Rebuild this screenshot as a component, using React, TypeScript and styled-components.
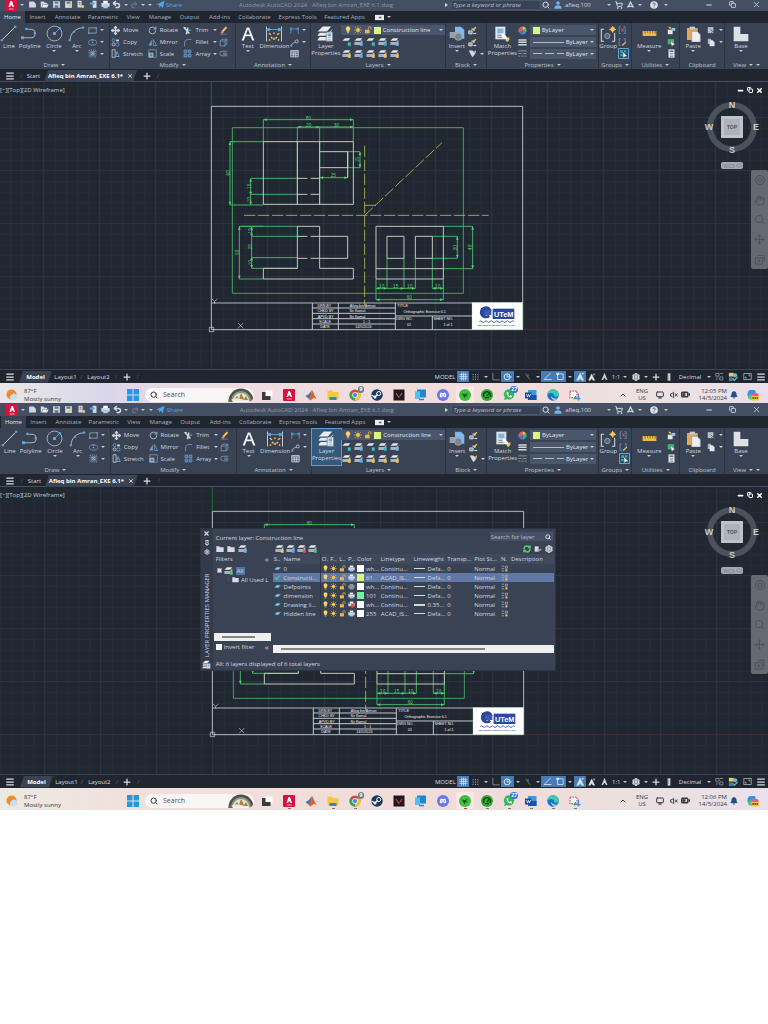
import React, { useId } from "react";
import styled, { createGlobalStyle, css } from "styled-components";
import {
  Menu, Plus, X, Search, Undo2, Redo2, Settings, ShoppingCart, Move, VolumeX, BatteryMedium,
  Monitor, ChevronUp, Bell, Minus, Copy as Restore, RefreshCw, RotateCw, Hand, Pin,
} from "lucide-react";

const L = "#d3d8e0";
const B = "#62a6dd";
const Y = "#efc55c";

const Global = createGlobalStyle`
  *, *::before, *::after { box-sizing: border-box; }
  body { margin: 0; background: #fff; font: 6px/8px "Open Sans", "Noto Sans", sans-serif; color: #d3d8e0; }
  button, input, select { font: inherit; color: inherit; background: none; border: 0; padding: 0; margin: 0; }
  svg { display: block; flex: none; }
`;

/* ---------- icons ---------- */
const art: Record<string, React.ReactNode> = {
  logo: <><rect width="24" height="24" rx="2" fill="#d8123f" /><path d="M7 16 11 4h3l4 12h-3l-1-3h-3l-1 3z" fill="#fff" /><path d="M8 20h9" stroke="#f7a5b8" strokeWidth="2" /></>,
  newFile: <path d="M3 4h12l6 6v10H3z" fill={L} />,
  open: <><path d="M2 4h8l2 3h7v4H7L4 20H2z" fill={L} /><path d="M8 12h15l-4 8H5z" fill="#eef1f5" /></>,
  save: <><path d="M3 3h18v18H3z" fill={L} /><path d="M7 4h10v6H7zM7 14h10v7H7z" fill="#6d7789" /></>,
  saveAs: <><path d="M3 3h18v18H3z" fill={L} /><path d="M7 4h10v6H7z" fill="#6d7789" /><path d="m10 20 11-9" stroke={Y} strokeWidth="4" /></>,
  sheetOut: <><path d="M4 2h11v18H4z" fill={L} /><path d="M7 7h5M7 11h5" stroke="#5b6577" strokeWidth="2" /><path d="M12 17h10M18 13v8" stroke={Y} strokeWidth="4" /></>,
  sheetIn: <><path d="M10 2h10v19H10z" fill={L} /><path d="M2 9h9M8 5l5 4-5 4" stroke={B} strokeWidth="4" fill="none" /></>,
  print: <><path d="M6 2h12v6H6z" fill="#fff" /><path d="M1 8h22v10H1z" fill={L} /><path d="M6 13h12v9H6z" fill="#9fd0ef" /></>,
  noPrint: <><path d="M6 2h12v6H6z" fill="#fff" /><path d="M1 8h22v10H1z" fill={L} /><circle cx="16" cy="16" r="7" fill="#e5484d" /></>,
  dimPrint: <path d="M6 3h12v5h5v10h-5v4H6v-4H1V8h5z" fill="#8a93a1" />,
  line: <><path d="M3 21 21 3" stroke={L} strokeWidth="1.3" /><path d="M1 20h3v3H1zM20 1h3v3h-3z" fill={B} /></>,
  polyline: <><path d="M2 18h12a6 6 0 0 0 0-12H8" stroke="#9fb0c5" strokeWidth="1.5" fill="none" /><path d="M0 16h4v4H0zM6 4h3v3H6zM18 10h3v3h-3z" fill={B} /></>,
  circle: <><circle cx="12" cy="12" r="10.5" stroke="#aab6c6" strokeWidth="1.3" fill="none" /><path d="m12 12 7-7" stroke={B} strokeWidth="1.2" /><path d="M10 10h4v4h-4zM18 3h3v3h-3z" fill={B} /></>,
  arc: <><path d="M3 21C3 12 11 4 21 4" stroke="#aab6c6" strokeWidth="1.4" fill="none" /><path d="M1 20h3v3H1zM20 2h3v3h-3zM7 8h3v3H7z" fill={B} /></>,
  rect: <><path d="M2 5h20v14H2z" stroke="#9dabbd" strokeWidth="2" fill="none" /><path d="M0 17h4v4H0zM20 3h4v4h-4z" fill={B} /></>,
  ellipse: <><ellipse cx="12" cy="12" rx="11" ry="7" stroke="#7fa3c9" strokeWidth="2" fill="none" /><path d="M10 10h4v4h-4zM10 3h4v4h-4z" fill={B} /></>,
  hatch: <><path d="M3 3h18v18H3z" stroke="#9dabbd" strokeWidth="2" strokeDasharray="3 2" fill="none" /><path d="M6 6h12v12H6z" fill="#5e84ab" /><path d="m7 17 10-10M7 11l4-4M13 17l4-4" stroke={L} strokeWidth="1.4" /></>,
  copy: <><circle cx="7" cy="6" r="4" stroke={B} strokeWidth="2" fill="none" /><circle cx="7" cy="17" r="4" stroke={L} strokeWidth="2" fill="none" /><circle cx="17" cy="17" r="4.5" stroke={B} strokeWidth="2" fill="none" /><path d="M14 4h7v5h-7z" fill={L} /></>,
  stretch: <><path d="M3 2v20h8V2z" stroke={L} strokeWidth="2" fill="none" /><path d="M12 20h10L16 7z" stroke={B} strokeWidth="2.5" fill="none" /></>,
  mirror: <><path d="M10 4v16H1z" fill="#7f9dbd" /><path d="M14 4v16h9z" stroke={B} strokeWidth="2" fill="none" /></>,
  scale: <><path d="M2 2h20v20H2z" stroke="#7f9dbd" strokeWidth="2" fill="none" /><path d="M3 11h10v10H3z" fill="#4d82b5" stroke={L} strokeWidth="2" /></>,
  trim: <><path d="M3 4 17 20M9 22l4-18" stroke={L} strokeWidth="4" /><path d="M13 11h9" stroke={B} strokeWidth="3" /><path d="M1 4h6" stroke={L} strokeWidth="3" /></>,
  fillet: <path d="M4 22V14C4 8 8 4 14 4h8" stroke="#6f93b9" strokeWidth="2.5" fill="none" />,
  array: <path d="M3 3h7v7H3zM14 3h7v7h-7zM3 14h7v7H3zM14 14h7v7h-7z" fill="#35618d" stroke="#7fa9d3" strokeWidth="2" />,
  erase: <><path d="M8 16 20 3" stroke={Y} strokeWidth="5" /><path d="m4 18 6-5 3 3-5 5z" fill="#e88b8b" /><path d="M2 22h20" stroke="#8291a6" strokeWidth="1.5" /></>,
  box3d: <path d="M3 8h13v13H3zM3 8l5-5h13l-5 5M21 3v13l-5 5" stroke="#7fa3c9" strokeWidth="2" fill="none" />,
  offset: <path d="M22 6H8a6 6 0 0 0 0 12h14M22 11H11M22 14H11" stroke="#7f9dbd" strokeWidth="2" fill="none" />,
  text: <path d="M1 23 10 1h4l9 22h-4l-2.5-7h-9L5 23zM8.600 13h6.800L12 4z" fill="#eef0f4" />,
  dim: <><path d="M2 2v20M22 2v20" stroke={L} strokeWidth="1.2" /><path d="M2 6h20M2 6l4-2v4zM22 6l-4-2v4z" stroke={B} strokeWidth="1.2" fill={B} /><path d="m8 13-3-2M12 12v-2M16 13l3-2M8 16l2 2M16 16l-2 2M12 17v3M7 20H5M19 20h-2" stroke={Y} strokeWidth="2" /></>,
  dimSmall: <path d="M2 3v18M22 3v18M2 8h20M6 5 2 8l4 3M18 5l4 3-4 3" stroke={B} strokeWidth="2" fill="none" />,
  leader: <><path d="M3 20c4-8 8-8 11-8" stroke={L} strokeWidth="2" fill="none" /><circle cx="18" cy="9" r="4" stroke={L} strokeWidth="2" fill="none" /><path d="M1 18h5v5H1z" fill={B} /></>,
  table: <path d="M2 4h20v17H2zM2 8h20M9 8v13M15 8v13M2 14h20" stroke={L} strokeWidth="2" fill="#596679" />,
  layers: <><path d="m1 9 7-7h12l-6 7zM1 14l3-3h12l6-5-6 9H1zM1 20l3-3h11v5H1z" fill="#e8ebef" /><path d="M13 10h9v13h-9z" fill="#f1f3f6" stroke="#6b7587" /><path d="M15 12h5v4h-5z" fill={B} /><path d="M15 18h5M15 21h5" stroke="#7b8698" /></>,
  bulb: <><path d="M12 1a7 7 0 0 0-4 12.500V17h8v-3.500A7 7 0 0 0 12 1z" fill="#ffd566" /><path d="M9 18h6v4H9z" fill="#a7adb8" /></>,
  sun: <><circle cx="12" cy="12" r="6" fill="#f5c145" /><path d="M12 1v4M12 19v4M1 12h4M19 12h4M4 4l3 3M17 17l3 3M4 20l3-3M17 7l3-3" stroke="#f5c145" strokeWidth="2.500" /></>,
  lock: <><path d="M3 11h14v11H3z" fill="#e8b64c" /><path d="M13 11V6a4 4 0 0 1 8 0v4" stroke="#e8b64c" strokeWidth="2.500" fill="none" /></>,
  insert: <><path d="M9 1h9l5 5v13H9z" fill="#7db9ea" /><path d="M1 9h14v9H1z" fill="#97a1af" /><circle cx="14" cy="16" r="5.500" fill="#7a8594" stroke="#aeb7c3" /></>,
  blockEdit: <><path d="M2 13h9v8H2zM9 8h7v5" stroke={L} strokeWidth="2.500" fill="#8d97a6" /><path d="m13 12 8-9" stroke={Y} strokeWidth="4" /><path d="M14 20h8" stroke={L} strokeWidth="3" /></>,
  tag: <><path d="M2 4h10l8 8-8 10-5-8z" fill={L} /><path d="m13 9 8-6v7z" fill={Y} /></>,
  listEdit: <><path d="M2 4h12v16H2z" fill={L} /><path d="m10 14 12-3v5l-8 3z" fill="#9aa4b2" /></>,
  match: <><path d="M2 1h15v19H2z" fill="#dfe3e8" /><path d="M5 4h9v7H5z" fill="#79b7e6" /><path d="M5 14h7M5 17h7" stroke="#7c8798" strokeWidth="1.500" /><path d="m12 12 8 8" stroke="#fff" strokeWidth="4" /><path d="m17 22 6-6v5l-3 3z" fill={Y} /></>,
  wheel: <><path d="M12 12V1a11 11 0 0 1 9.500 5.500z" fill="#f3c63c" /><path d="M12 12 21.500 6.500a11 11 0 0 1 0 11z" fill="#52b960" /><path d="m12 12 9.500 5.500A11 11 0 0 1 12 23z" fill="#35a0d8" /><path d="M12 12v11a11 11 0 0 1-9.500-5.500z" fill="#5c6bd0" /><path d="m12 12-9.500 5.500a11 11 0 0 1 0-11z" fill="#c558b4" /><path d="M12 12 2.500 6.500A11 11 0 0 1 12 1z" fill="#ea6544" /></>,
  weights: <path d="M1 5h22M1 11h22M1 18h22" stroke={L} strokeWidth="4" />,
  styles: <path d="M1 5h22M1 12h9M13 12h10M1 19h5M9 19h6M18 19h5" stroke="#8d98a9" strokeWidth="2.500" />,
  group: <><path d="M6 5H2v18h4M18 23h4V10" stroke={L} strokeWidth="1.600" fill="none" /><circle cx="11" cy="15" r="4" stroke="#8fa1b7" strokeWidth="1.500" fill="#58677c" /><circle cx="19" cy="5" r="3.500" fill={Y} /><path d="M19 0v10M14 5h10" stroke={Y} strokeWidth="1.500" /></>,
  ungroup: <><path d="M7 2H3v18h4M15 2h4v18h-4" stroke={B} strokeWidth="2" fill="none" /><path d="m9 6 6 9M15 6l-6 9" stroke="#e66b6b" strokeWidth="2" /></>,
  groupEdit: <><path d="M7 2H3v18h4M15 2h4v9" stroke={B} strokeWidth="2" fill="none" /><path d="m11 20 10-9" stroke={Y} strokeWidth="3.500" /></>,
  groupPick: <><path d="M1 1h22v22H1z" stroke="#6aaee3" strokeWidth="2" fill="#255070" /><path d="M5 5h6v6H5zM13 5h5v5h-5zM5 13h5v5H5z" fill="#57a579" /><path d="m11 9 9 9h-5l-3 4z" fill="#fff" /></>,
  measure: <><path d="M1 8h22v8H1z" fill="#e9b84d" /><path d="M5 8v4M9 8v3M13 8v4M17 8v3M21 8v4" stroke="#7a5a17" strokeWidth="1.200" /></>,
  selectFast: <><path d="M2 10h13v12H2z" fill="#e1e5ea" /><path d="m3 1 6 9 2-7z" fill={Y} /><path d="M12 5h10v8H12z" fill="#8fc4eb" /></>,
  selectAll: <><path d="M2 3h17v14H2z" fill="#49ad74" /><path d="m11 9 10 9h-5l-3 5z" fill="#fff" /></>,
  calc: <><path d="M4 1h16v22H4z" fill="#e2e5e9" /><path d="M7 4h10v4H7z" fill="#626c7c" /><path d="M8 12h8M8 16h8M8 20h8" stroke="#626c7c" strokeWidth="2" strokeDasharray="2 1" /></>,
  paste: <><path d="M3 3h16v18H3z" fill="#dfa85a" /><path d="M7 1h8v4H7z" fill="#c8ccd3" /><path d="M10 8h8l5 5v11H10z" fill="#eceef1" stroke="#8a93a2" /></>,
  cut: <><path d="M2 3h15v16H2z" fill="#b9c0ca" /><path d="m9 9 12 12M21 9 9 21" stroke="#5b6473" strokeWidth="2.500" /></>,
  clip: <><path d="M2 2h9v14H2z" fill="#aab2bf" /><path d="M7 6h8l5 5v11H7z" fill="#e3e6ea" /></>,
  base: <path d="M1 1h10v11h12v11H1z" fill="#dde0e4" />,
  plane: <path d="M1 12 23 2l-5 19-6-6-3 6-1-8z" fill="#45aaf0" />,
  app: <><path d="M12 2 3 20h4l5-11 5 11h4z" fill={L} /><path d="M4 17h16" stroke={L} strokeWidth="3" /></>,
  person: <><circle cx="12" cy="6" r="5.500" fill="#70b5ee" /><path d="M1 23c0-7 5-10 11-10s11 3 11 10z" fill="#70b5ee" /></>,
  help: <><circle cx="12" cy="12" r="11.500" fill="#dde1e7" /><path d="M8.500 9.500a3.500 3.500 0 1 1 5 3c-1.500.8-1.500 1.500-1.500 3M12 17v2.500" stroke="#434d60" strokeWidth="2.600" fill="none" /></>,
  ribbon: <><path d="M0 5h24v14H0z" fill="#e9ebee" /><path d="M10 10h7v4h-7z" fill="#5c6573" /></>,
  grid: <path d="M7 1v22M12 1v22M17 1v22M1 7h22M1 12h22M1 17h22" stroke="#e6ecf3" strokeWidth="1.800" />,
  dots: <path d="M2 5h20M2 12h20M2 19h20" stroke="#aab2be" strokeWidth="3" strokeDasharray="3 4" />,
  ortho: <path d="M5 2v19h18" stroke="#7d8796" strokeWidth="2.500" fill="none" />,
  polar: <><circle cx="11" cy="13" r="8" stroke="#e3edf7" strokeWidth="2.500" fill="none" /><path d="M11 13h12M11 5v8" stroke="#e3edf7" strokeWidth="2" /></>,
  iso: <path d="M4 2l14 18M12 12V3" stroke="#79848f" strokeWidth="2.500" />,
  angle: <path d="M20 3 3 20h20" stroke="#d7e7f6" strokeWidth="2.200" fill="none" />,
  osnap: <><path d="M4 5h15v15H4z" stroke="#d7e7f6" strokeWidth="2.200" fill="none" /><path d="M1 2h7v6H1z" fill="#d7e7f6" /></>,
  anno: <path d="M11 3 2 22h5l4-7 4 7h5zM9 14h6M18 1v7M15 4h7" fill="#dfe5ec" stroke="#dfe5ec" strokeWidth="1.500" />,
  annoPlain: <path d="M12 2 4 21h4l4-6 4 6h4z" fill="#c7ced7" />,
  quick: <path d="M2 4h9v7H2zM13 13h8v8h-8zM13 4h9M5 14v7M9 18h3" stroke="#8b95a4" strokeWidth="2.200" fill="none" />,
  isolate: <><path d="M2 2h12v9H2z" fill={Y} /><path d="M2 13h9v9H2z" fill="#3c79c5" /><circle cx="17" cy="8" r="5" fill="#68b6ef" /><path d="m11 15 4 5 8-8" stroke="#67ce7d" strokeWidth="3" fill="none" /></>,
  clean: <path d="M2 4h20v16H2zM14 8h4v4M10 16H6v-4" stroke="#b4bcc7" strokeWidth="2" fill="none" />,
  unit: <path d="M8 1h8v22H8zM8 6h4M8 11h4M8 17h4" fill="#d6dbe2" stroke="#616b7a" strokeWidth="1.300" />,
  slab: <path d="M3 15 9 8h13l-7 8z" fill="#8fc9ef" stroke="#4a9dd5" strokeWidth="2" />,
  check: <path d="m3 12 6 6L22 5" stroke="#55d07c" strokeWidth="4" fill="none" />,
  vp: <><path d="M2 4h9M2 12h9M2 20h9M15 4h7v7h-7z" stroke="#a9b1bd" strokeWidth="2.500" fill="none" /><path d="M15 15h7v7h-7z" fill={Y} /></>,
  folder: <path d="M1 4h9l2 3h11v14H1z" fill="#d7dbe1" />,
  windows: <path d="M0 0h11v11H0zM13 0h11v11H13zM0 13h11v11H0zM13 13h11v11H13z" fill="#2598e4" />,
  weather: <><circle cx="11" cy="11" r="10" fill="#f28c28" /><path d="M10 21a5 5 0 0 1 1-9 6 6 0 0 1 11 3 3.500 3.500 0 0 1-1 6z" fill="#c8def5" /></>,
  taskview: <><path d="M8 3h15v14H8z" fill="#fbfbfb" /><path d="M2 6h7v8h10v8H2z" fill="#3a3a3a" /></>,
  matlab: <><path d="M1 14 8 10l6-8-3 14-4 3z" fill="#3f76a8" /><path d="M14 2c3 4 5 12 9 18-4-3-6-3-8 0l-5 3-3-4c4-2 5-9 7-17z" fill="#df6226" /></>,
  explorer: <><path d="M1 3h9l2 3h11v15H1z" fill="#f7c744" /><path d="M5 16h14v6H5z" fill="#2d86d0" /></>,
  chrome: <><circle cx="12" cy="12" r="11" fill="#e0453a" /><path d="M12 12 2.500 6.500A11 11 0 0 0 12 23z" fill="#37a457" /><path d="M12 12v11A11 11 0 0 0 22 7H12z" fill="#f5c62c" /><circle cx="12" cy="12" r="5" fill="#3e82ec" stroke="#fff" strokeWidth="1.600" /></>,
  steam: <><circle cx="12" cy="12" r="11.500" fill="#183b61" /><circle cx="15.500" cy="9" r="4" stroke="#fff" strokeWidth="2" fill="none" /><circle cx="8" cy="16" r="3" fill="#fff" /><path d="m1 12 7 4 5-5" stroke="#fff" strokeWidth="2.500" fill="none" /></>,
  valorant: <><path d="M1 1h22v22H1z" fill="#1b1922" /><path d="m6 8 5 8h3M18 8l-4 6" stroke="#e6485b" strokeWidth="2.200" fill="none" /></>,
  pc: <><path d="M4 1h18v16H4z" fill="#1e88d5" /><path d="M0 5h10v15H0z" fill="#58bdf2" /><path d="M8 21h10" stroke="#1e88d5" strokeWidth="3" /></>,
  discord: <><circle cx="12" cy="12" r="12" fill="#6877ea" /><path d="M6 16c-1-4 0-7 2-9l3 1h2l3-1c2 2 3 5 2 9l-3 1-1-2h-4l-1 2z" fill="#fff" /><circle cx="9.500" cy="12" r="1.500" fill="#6877ea" /><circle cx="14.500" cy="12" r="1.500" fill="#6877ea" /></>,
  razer: <><circle cx="12" cy="12" r="12" fill="#3bc13b" /><path d="m5 8 6 3 7-4-4 5 3 2-5 1-1 4-2-5z" fill="#184818" /></>,
  cortex: <><circle cx="12" cy="12" r="12" fill="#2cab30" /><path d="M6 16a7 7 0 1 1 12 0M12 14l4-5M8 17h8" stroke="#113b14" strokeWidth="2.500" fill="none" /></>,
  whatsapp: <><path d="M1 23 3 17a11 11 0 1 1 5 4z" fill="#35b457" stroke="#fff" strokeWidth="1" /><path d="M7 7c0 6 4 10 10 10l1-3-3-2-2 2c-2-1-3-2-3-4l1-1-1-3z" fill="#fff" /></>,
  word: <><path d="M6 2h17v20H6z" fill="#3a9be3" /><path d="M6 12h17v10H6z" fill="#1a55ab" /><path d="M0 7h13v12H0z" fill="#184a9b" /><path d="m3 10 2 6 2-5 2 5 2-6" stroke="#fff" strokeWidth="1.500" fill="none" /></>,
  edge: <><circle cx="12" cy="12" r="11.500" fill="#1576c8" /><path d="M1 11C2 4 7 .5 12 .5c7 0 11.500 5 11.500 10 0 4-4 6-9 4 1-7-8-9-13.500-3.500z" fill="#43c8b0" /><path d="M9 13c0 5 5 8 11 6-5 5-13 2-11-6z" fill="#e8f5fb" /></>,
  snip: <><path d="M2 4h14v13H2z" stroke="#e2574d" strokeWidth="2.500" strokeDasharray="3 2" fill="#fff" /><path d="M19 9v14M9 19h14M13 14v6" stroke="#3a93d8" strokeWidth="2.500" /></>,
  copilot: <><path d="M7 2h7c3 0 4 3 3 8l-2 6H5c-5 0-5-5-3-10 1-3 3-4 5-4z" fill="#3992e3" /><path d="M17 22h-7c-3 0-4-3-3-8l2-6h10c5 0 5 5 3 10-1 3-3 4-5 4z" fill="#e65aa5" /><path d="M3 12c4-2 7 0 8 4l-3 5C3 22 1 17 3 12z" fill="#58c07a" /><path d="M9 14h15v9H9z" fill="#f3ca35" /><path d="M11 18h11" stroke="#333" strokeWidth="3" strokeDasharray="3 1" /></>,
};

const Art = ({ n, s = 9 }: { n: string; s?: number }) => (
  <svg width={s} height={s} viewBox="0 0 24 24" aria-hidden="true">{art[n]}</svg>
);

const layerMarks = [["#3cc4c0", "#6cb4e4", "#3cc4c0", "#3cb9c0", "#74b8ea"], [Y, "#55aaf0", Y, Y, Y]];
const LayerArt = ({ mark, thin }: { mark: string; thin?: boolean }) => (
  <svg width="10" height="10" viewBox="0 0 24 24" aria-hidden="true">
    <path d="m1 9 6-6h13l-5 6z" fill="#e3e6ea" />
    {!thin && <path d="M1 12h14l5-6v8l-5 5H1z" fill="#a8b1bd" />}
    <path d="M14 13h7v8h-7z" fill={mark} />
  </svg>
);

/* ---------- shared pieces ---------- */
const Track = styled.div<{ $cols: number[]; $inset?: boolean }>`
  display: grid;
  grid-template-columns: ${(p) => p.$cols.map((n) => `minmax(0, ${n}fr)`).join(" ")};
  align-items: center;
  justify-items: center;
  white-space: nowrap;
  padding-left: ${(p) => (p.$inset ? 1 : 0)}px;
`;
const Start = styled.span`justify-self: start;`;
const IconButton = styled.button<{ $on?: boolean; $start?: boolean }>`
  display: grid;
  place-items: center;
  min-width: 5px;
  ${(p) => p.$start && css`justify-self: start;`}
  ${(p) => p.$on && css`background: #467bb3; width: 100%; height: 11px;`}
`;
const Caret = styled.i<{ $side?: boolean }>`
  display: block;
  flex: none;
  border: solid transparent;
  ${(p) => p.$side
    ? css`border-width: 2px 0 2px 3px; border-left-color: #d3d8e0;`
    : css`border-width: 2px 2px 0; border-top-color: #c3c9d3;`}
`;
const CaretButton = ({ label }: { label: string }) => <IconButton aria-label={label}><Caret /></IconButton>;

/* ---------- title bar ---------- */
const TitleRow = styled(Track)`height: 13px;`;
const TitleBar = styled.header<{ $cut?: boolean }>`
  height: ${(p) => (p.$cut ? 11 : 13)}px;
  overflow: hidden;
  background: #454f63;
  ${TitleRow} { margin-top: ${(p) => (p.$cut ? -2 : 0)}px; }
`;
const Dim = styled.span`justify-self: start; color: #8f98a7;`;
const Share = styled.a`justify-self: start; color: #4fa9e8; text-decoration: none;`;
const HelpSearch = styled.input`
  width: 100%;
  height: 10px;
  padding-left: 1px;
  background: #3a4355;
  border: 1px solid #4c566a;
  font-style: italic;
  &::placeholder { color: #b9c0cb; opacity: 1; }
`;

const titleCols = [4, 14, 8, 12, 12, 12, 12, 13, 12, 12, 11, 7, 10, 7, 8, 12, 73, 73, 130, 9, 90, 10, 14, 39, 9, 12, 11, 8, 19, 35, 22, 24, 24];

const Title = ({ cut, inset }: { cut?: boolean; inset?: boolean }) => (
  <TitleBar $cut={cut}>
    <TitleRow $cols={titleCols} $inset={inset}>
      <span />
      <IconButton aria-label="Application menu"><Art n="logo" s={12} /></IconButton>
      <CaretButton label="Application options" />
      {["newFile", "open", "save", "saveAs", "sheetOut", "sheetIn", "print"].map((n) => (
        <IconButton key={n} aria-label={n}><Art n={n} s={9} /></IconButton>
      ))}
      <IconButton aria-label="Undo"><Undo2 size={9} strokeWidth={4} /></IconButton>
      <CaretButton label="Undo list" />
      <IconButton aria-label="Redo"><Redo2 size={8} strokeWidth={3} color="#727c8e" /></IconButton>
      <CaretButton label="Redo list" />
      <CaretButton label="Customize" />
      <Art n="plane" s={9} />
      <Share href="#share">Share</Share>
      <Dim>Autodesk AutoCAD 2024</Dim>
      <Dim>Afieq bin Amran_EXE 6.1.dwg</Dim>
      <Caret $side />
      <HelpSearch aria-label="Search help" placeholder="Type a keyword or phrase" />
      <IconButton aria-label="Search"><Search size={8} strokeWidth={3} /></IconButton>
      <Art n="person" s={8} />
      <Start>afieq.100</Start>
      <CaretButton label="Account" />
      <IconButton aria-label="Cart"><ShoppingCart size={8} strokeWidth={3} /></IconButton>
      <IconButton aria-label="Apps"><Art n="app" s={9} /></IconButton>
      <CaretButton label="Apps list" />
      <IconButton aria-label="Help"><Art n="help" s={8} /></IconButton>
      <IconButton $start aria-label="Help list"><Caret /></IconButton>
      <IconButton aria-label="Minimize"><Minus size={8} strokeWidth={3} /></IconButton>
      <IconButton aria-label="Restore"><Restore size={7} strokeWidth={3} /></IconButton>
      <IconButton aria-label="Close"><X size={9} strokeWidth={2} /></IconButton>
    </TitleRow>
  </TitleBar>
);

/* ---------- ribbon ---------- */
const RibbonTabs = styled(Track).attrs({ as: "nav" })`height: 12px; background: #20262f;`;
const RibbonTab = styled.button<{ $on?: boolean }>`
  height: 12px;
  color: #a9b1bd;
  ${(p) => p.$on && css`width: 100%; background: #3a4353; color: #e4e8ee;`}
`;
const Ribbon = styled(Track)`
  height: 46px;
  background: #3a4353;
  align-items: stretch;
  justify-items: stretch;
`;
const Panel = styled.section`
  display: grid;
  grid-template-rows: 37px 9px;
  min-width: 0;
  border-right: 1px solid #2c333f;
  &:last-child { border-right: 0; }
`;
const PanelBody = styled(Track)`align-items: stretch; justify-items: stretch; padding-top: 1px;`;
const PanelName = styled.button`
  display: flex;
  justify-content: center;
  align-items: center;
  gap: 3px;
  min-width: 0;
  white-space: nowrap;
  color: #bcc3cd;
`;
const Stack = styled.div`
  display: grid;
  grid-template-rows: 12px 12px 11px;
  min-width: 0;
`;
const Tool = styled.button`
  display: flex;
  align-items: center;
  gap: 3px;
  min-width: 0;
  padding-left: 1px;
  white-space: nowrap;
`;
const ToolName = styled.span<{ $w?: number }>`min-width: ${(p) => p.$w || 0}px; text-align: left;`;
const BigTool = styled.button<{ $on?: boolean }>`
  display: flex;
  flex-direction: column;
  align-items: center;
  min-width: 0;
  line-height: 7px;
  ${(p) => p.$on && css`background: #35597b; box-shadow: 0 0 0 1px #5b9bd0;`}
`;
const BigArt = styled.span`display: grid; place-items: center; height: 19px;`;
const BigName = styled.span`
  display: flex;
  flex-direction: column;
  align-items: center;
  width: 100%;
  white-space: nowrap;
`;

const Big = ({ n, s = 16, names, menu, on }: { n: string; s?: number; names: string[]; menu?: boolean; on?: boolean }) => (
  <BigTool $on={on}>
    <BigArt><Art n={n} s={s} /></BigArt>
    <BigName>{names.map((t) => <span key={t}>{t}</span>)}</BigName>
    {menu && <Caret />}
  </BigTool>
);
const Small = ({ n, name, menu, w, node }: { n?: string; name?: string; menu?: boolean; w?: number; node?: React.ReactNode }) => (
  <Tool aria-label={name || n}>
    {node || <Art n={n!} s={9} />}
    {name && <ToolName $w={w}>{name}</ToolName>}
    {menu && <Caret />}
  </Tool>
);
const Name = ({ children, extra, flat }: { children: React.ReactNode; extra?: boolean; flat?: boolean }) => (
  <PanelName>{children}{!flat && <Caret />}{extra && <Caret />}</PanelName>
);

const Combo = styled.label`
  display: flex;
  align-items: center;
  gap: 2px;
  height: 10px;
  align-self: center;
  min-width: 0;
  padding: 0 2px 0 3px;
  background: #49566c;
`;
const ComboSelect = styled.select`
  appearance: none;
  flex: 1;
  min-width: 0;
  height: 8px;
  line-height: 8px;
  color: #e2e6ec;
`;
const Swatch = styled.i<{ $c?: string }>`
  flex: none;
  width: 7px;
  height: 7px;
  background: ${(p) => p.$c || "#dcf57c"};
`;
const Stroke = styled.i<{ $dashed?: boolean }>`
  flex: none;
  width: 31px;
  height: 1px;
  background: ${(p) => (p.$dashed ? "repeating-linear-gradient(90deg, #b4bcc8 0 9px, transparent 9px 12px)" : "#b4bcc8")};
`;
const IconRow = styled.div`
  display: grid;
  grid-template-columns: repeat(5, 12px);
  align-items: center;
  justify-items: center;
`;
const PropRow = styled.div`
  display: grid;
  grid-template-columns: 10px minmax(0, 1fr);
  gap: 2px;
  align-items: center;
  padding-right: 2px;
`;

const tabs: [string, number][] = [
  ["Home", 25], ["Insert", 25], ["Annotate", 35], ["Parametric", 36], ["View", 24], ["Manage", 30], ["Output", 29], ["Add-ins", 31],
  ["Collaborate", 39], ["Express Tools", 47], ["Featured Apps", 47],
];

const RibbonArea = ({ active, inset }: { active?: boolean; inset?: boolean }) => (
  <>
    <RibbonTabs $inset={inset} $cols={[...tabs.map((t) => t[1]), 4, 20, 376]}>
      {tabs.map(([t], i) => <RibbonTab key={t} $on={i === 0}>{t}</RibbonTab>)}
      <span />
      <Tool aria-label="Ribbon display"><Art n="ribbon" s={9} /><Caret /></Tool>
    </RibbonTabs>
    <Ribbon $inset={inset} $cols={[110, 126, 75, 135, 41, 112, 33, 48, 45, 43]}>
      <Panel>
        <PanelBody $cols={[18, 24, 25, 21, 22]}>
          <Big n="line" s={17} names={["Line"]} />
          <Big n="polyline" s={17} names={["Polyline"]} />
          <Big n="circle" s={17} names={["Circle"]} menu />
          <Big n="arc" s={17} names={["Arc"]} menu />
          <Stack><Small n="rect" menu /><Small n="ellipse" menu /><Small n="hatch" menu /></Stack>
        </PanelBody>
        <Name>Draw</Name>
      </Panel>
      <Panel>
        <PanelBody $cols={[37, 36, 36, 17]}>
          <Stack>
            <Small name="Move" node={<Move size={9} strokeWidth={3.5} />} /><Small n="copy" name="Copy" /><Small n="stretch" name="Stretch" />
          </Stack>
          <Stack>
            <Small name="Rotate" node={<RotateCw size={9} strokeWidth={2.5} color="#9fb5cc" />} /><Small n="mirror" name="Mirror" /><Small n="scale" name="Scale" />
          </Stack>
          <Stack>
            <Small n="trim" name="Trim" w={15} menu /><Small n="fillet" name="Fillet" w={15} menu /><Small n="array" name="Array" w={15} menu />
          </Stack>
          <Stack><Small n="erase" /><Small n="box3d" /><Small n="offset" /></Stack>
        </PanelBody>
        <Name>Modify</Name>
      </Panel>
      <Panel>
        <PanelBody $cols={[24, 30, 21]}>
          <Big n="text" s={14} names={["Text"]} menu />
          <Big n="dim" s={18} names={["Dimension"]} />
          <Stack><Small n="dimSmall" menu /><Small n="leader" menu /><Small n="table" /></Stack>
        </PanelBody>
        <Name>Annotation</Name>
      </Panel>
      <Panel>
        <PanelBody $cols={[30, 105]}>
          <Big n="layers" s={17} names={["Layer", "Properties"]} on={active} />
          <Stack>
            <Combo>
              <Art n="bulb" s={8} /><Art n="sun" s={8} /><Art n="lock" s={8} /><Swatch />
              <ComboSelect aria-label="Layer" defaultValue="c"><option value="c">Construction line</option></ComboSelect>
              <Caret />
            </Combo>
            {layerMarks.map((row, r) => (
              <IconRow key={r}>
                {row.map((m, i) => <IconButton key={i} aria-label={`Layer tool ${r * 5 + i + 1}`}><LayerArt mark={m} thin={r === 0 && i % 2 === 0 && i < 4} /></IconButton>)}
              </IconRow>
            ))}
          </Stack>
        </PanelBody>
        <Name>Layers</Name>
      </Panel>
      <Panel>
        <PanelBody $cols={[22, 19]}>
          <Big n="insert" names={["Insert"]} menu />
          <Stack><Small n="blockEdit" /><Small n="blockEdit" /><Small n="tag" menu /></Stack>
        </PanelBody>
        <Name>Block</Name>
      </Panel>
      <Panel>
        <PanelBody $cols={[31, 81]}>
          <Big n="match" names={["Match", "Properties"]} />
          <Stack>
            <PropRow>
              <Art n="wheel" s={9} />
              <Combo><Swatch /><ComboSelect aria-label="Object color"><option>ByLayer</option></ComboSelect><Caret /></Combo>
            </PropRow>
            <PropRow>
              <Art n="weights" s={9} />
              <Combo><Stroke /><ComboSelect aria-label="Lineweight"><option>ByLayer</option></ComboSelect><Caret /></Combo>
            </PropRow>
            <PropRow>
              <Art n="styles" s={9} />
              <Combo><Stroke $dashed /><ComboSelect aria-label="Linetype"><option>ByLayer</option></ComboSelect><Caret /></Combo>
            </PropRow>
          </Stack>
        </PanelBody>
        <Name>Properties</Name>
      </Panel>
      <Panel>
        <PanelBody $cols={[19, 14]}>
          <Big n="group" names={["Group"]} />
          <Stack><Small n="ungroup" /><Small n="groupEdit" /><Small n="groupPick" node={<Art n="groupPick" s={11} />} /></Stack>
        </PanelBody>
        <Name>Groups</Name>
      </Panel>
      <Panel>
        <PanelBody $cols={[35, 13]}>
          <Big n="measure" s={15} names={["Measure"]} menu />
          <Stack><Small n="selectFast" /><Small n="selectAll" /><Small n="calc" /></Stack>
        </PanelBody>
        <Name>Utilities</Name>
      </Panel>
      <Panel>
        <PanelBody $cols={[27, 18]}>
          <Big n="paste" names={["Paste"]} menu />
          <Stack><Small n="cut" menu /><Small n="clip" menu /></Stack>
        </PanelBody>
        <Name flat>Clipboard</Name>
      </Panel>
      <Panel>
        <PanelBody $cols={[32, 11]}>
          <Big n="base" names={["Base"]} menu />
        </PanelBody>
        <Name extra>View</Name>
      </Panel>
    </Ribbon>
  </>
);

/* ---------- tab strips ---------- */
const Strip = styled(Track)`height: 13px; background: #20262f; color: #d8dde4;`;
const FileStrip = styled(Strip)`padding-top: 1px; border-bottom: 1px solid #465063;`;
const Slanted = styled.div`
  justify-self: stretch;
  display: flex;
  align-items: center;
  justify-content: center;
  gap: 4px;
  height: 12px;
  background: #3a4353;
  clip-path: polygon(4px 0, 100% 0, calc(100% - 4px) 100%, 0 100%);
  color: #fff;
  font-weight: 700;
`;
const Slash = styled.span`color: #5a6475;`;
const FileTabs = ({ inset }: { inset?: boolean }) => (
  <FileStrip $inset={inset} $cols={[19, 4, 21, 93, 19, 4, 608]}>
    <IconButton aria-label="File list"><Menu size={10} strokeWidth={3} /></IconButton>
    <Slash>/</Slash>
    <button>Start</button>
    <Slanted>Afieq bin Amran_EXE 6.1* <X size={6} strokeWidth={3} /></Slanted>
    <IconButton aria-label="New tab"><Plus size={10} strokeWidth={3} /></IconButton>
    <Slash>/</Slash>
  </FileStrip>
);

const StatusBar = styled(Strip)`height: 14px; border-top: 1px solid #3a4456;`;
const statusCols = [19, 33, 27, 4, 31, 4, 17, 5, 293, 24, 12, 13, 7, 12, 13, 7, 14, 6, 13, 12, 8, 12, 12, 12, 12, 6, 15, 6, 14, 12, 30, 7, 14, 14, 14, 14];
const Status = ({ inset }: { inset?: boolean }) => (
  <StatusBar as="footer" $inset={inset} $cols={statusCols}>
    <IconButton aria-label="Layouts"><Menu size={10} strokeWidth={3} /></IconButton>
    <Slanted>Model</Slanted>
    <button>Layout1</button>
    <Slash>/</Slash>
    <button>Layout2</button>
    <Slash>/</Slash>
    <IconButton aria-label="New layout"><Plus size={10} strokeWidth={3} /></IconButton>
    <Slash>/</Slash>
    <span />
    <button>MODEL</button>
    <IconButton $on aria-label="Grid"><Art n="grid" s={9} /></IconButton>
    <IconButton aria-label="Snap"><Art n="dots" s={8} /></IconButton>
    <CaretButton label="Snap options" />
    <IconButton aria-label="Ortho"><Art n="ortho" s={9} /></IconButton>
    <IconButton $on aria-label="Polar"><Art n="polar" s={9} /></IconButton>
    <CaretButton label="Polar options" />
    <IconButton aria-label="Isometric"><Art n="iso" s={8} /></IconButton>
    <CaretButton label="Isometric options" />
    <IconButton $on aria-label="Object tracking"><Art n="angle" s={9} /></IconButton>
    <IconButton $on aria-label="Object snap"><Art n="osnap" s={9} /></IconButton>
    <CaretButton label="Snap list" />
    <IconButton $on aria-label="Annotation visibility"><Art n="anno" s={9} /></IconButton>
    <IconButton aria-label="Annotation auto scale"><Art n="anno" s={8} /></IconButton>
    <IconButton aria-label="Annotation scale"><Art n="annoPlain" s={9} /></IconButton>
    <button>1:1</button>
    <CaretButton label="Scale list" />
    <IconButton aria-label="Workspace"><Settings size={8} strokeWidth={4} /></IconButton>
    <CaretButton label="Workspace list" />
    <IconButton aria-label="Monitor"><Plus size={10} strokeWidth={3} /></IconButton>
    <Art n="unit" s={8} />
    <button>Decimal</button>
    <CaretButton label="Units" />
    <IconButton aria-label="Quick properties"><Art n="quick" s={9} /></IconButton>
    <IconButton aria-label="Isolate"><Art n="isolate" s={10} /></IconButton>
    <IconButton aria-label="Clean screen"><Art n="clean" s={9} /></IconButton>
    <IconButton aria-label="Customization"><Menu size={10} strokeWidth={3} /></IconButton>
  </StatusBar>
);

/* ---------- drawing area ---------- */
const Canvas = styled.main`
  position: relative;
  background: #202731;
`;
const Sheet = styled.svg`width: 100%; height: auto;`;
const ViewLabel = styled.span`position: absolute; left: 0; top: 4px; color: #c9cfd7;`;
const DocButtons = styled.div`
  position: absolute;
  right: 5px;
  top: 5px;
  display: flex;
  gap: 3px;
  color: #fff;
`;
const CubeBox = styled.div`
  position: absolute;
  right: 8px;
  top: 17px;
`;
const NavBar = styled.div`
  position: absolute;
  right: 0;
  top: 88px;
  display: flex;
  flex-direction: column;
  align-items: center;
  justify-content: space-around;
  width: 17px;
  height: 99px;
  border-radius: 2px;
  background: #646a70;
  color: #4a5158;
`;

/* The 3x drawing units keep every line on whole numbers. */
const Dims = ({ x, y, t, v }: { x: number; y: number; t: string; v?: boolean }) => (
  <text x={x} y={y} transform={v ? `rotate(-90 ${x} ${y})` : undefined} textAnchor="middle" fill="#55cf78" fontSize="14">{t}</text>
);
const Block = ({ x, y, a = "middle", children }: { x: number; y: number; a?: "middle" | "start"; children: string }) => (
  <text x={x} y={y} textAnchor={a} fill="#f2f3f5" fontSize="11">{children}</text>
);

const Drawing = ({ shift = 0 }: { shift?: number }) => {
  const id = useId();
  return (
    <Sheet viewBox="0 0 768 287" role="img" aria-label="Orthographic drawing">
      <defs>
        <pattern id={`${id}a`} width="11.200" height="10.600" patternUnits="userSpaceOnUse" x={211.5 + shift} y="247.500">
          <path d="M.5 0v10.600M0 .5h11.200" stroke="#242c37" />
        </pattern>
        <pattern id={`${id}b`} width="56" height="53" patternUnits="userSpaceOnUse" x={211 + shift} y="247">
          <path d="M.5 0v53M0 .5h56" stroke="#2a333f" />
        </pattern>
      </defs>
      <rect width="768" height="287" fill={`url(#${id}a)`} />
      <rect width="768" height="287" fill={`url(#${id}b)`} />
      <g transform={`translate(${200 + shift} 13) scale(.33333)`} fill="none" strokeWidth="3" fontFamily="Liberation Sans, sans-serif">
        <path d="M34 -39V34" stroke="#24652f" />
        <path d="M968 704H1710" stroke="#4d272e" />
        <path d="M34 34H968V704H34zM34 624H816" stroke="#b5b9be" />
        <path d="M97 98H790V595H97z" stroke="#3fa45c" />
        <path
          stroke="#43b464"
          d="M190 140V74H460V140M292 328V96H460M359 328V96M190 140H90V330H190M90 140H105M152 250H292M152 298H292M152 250V330M359 248H443V170M443 170H480V218H443M118 394H190M292 394H118V552H190M155 394V520H292M155 424H292M155 488H292M697 424H772V490H697M730 394H818V521H730M528 552V614H730V552M561 490V580M612 490V580M646 490V580M697 490V580M528 580H646M697 580H730V552"
        />
        <path
          fill="#55cf78"
          d="M190 74l10-4v8zM460 74l-10-4v8zM292 96l10-4v8zM460 96l-10-4v8zM359 96l-10-4v8zM90 140l-4 10h8zM90 330l-4-10h8zM152 250l-4 10h8zM152 330l-4-10h8zM152 298l-5-8h10zM118 394l-4 10h8zM118 552l-4-10h8zM155 394l-4 10h8zM155 520l-4-10h8zM155 424l-5-8h10zM155 488l-5 8h10zM359 248l10-4v8zM443 248l-10-4v8zM480 170l-4 10h8zM480 218l-4-10h8zM772 424l-4 10h8zM772 490l-4-10h8zM818 394l-4 10h8zM818 521l-4-10h8zM528 614l10-4v8zM730 614l-10-4v8zM528 580l10-4v8zM561 580l-10-4v8zM612 580l-10-4v8zM646 580l-10-4v8zM697 580l10-4v8zM730 580l-10-4v8z"
        />
        <path
          stroke="#c6cabb"
          d="M190 140H460V328H190zM292 140V328M359 140V328M359 170H443V218H359M443 170V248M292 250H322M332 250H359M292 298H322M332 298H359M190 552V520H292V394H359V520H460V552zM292 424H322M332 424H359M292 490H322M332 490H359M359 424H443V490H359M528 394H730V552H528zM528 521H730M561 424H612V490H561zM646 424H697V490H646z"
        />
        <path stroke="#b5bf55" strokeWidth="2.500" strokeDasharray="34 8" d="M132 361H866M494 152V632M494 361 726 143" />
        <path stroke="#b5bf55" strokeWidth="2.500" d="M494 331H528" />
        <Dims x={325} y={75} t="80" /><Dims x={326} y={96} t="20" /><Dims x={409} y={96} t="30" />
        <Dims x={90} y={234} t="60" v /><Dims x={152} y={274} t="15" v /><Dims x={152} y={314} t="10" v />
        <Dims x={400} y={246} t="25" /><Dims x={477} y={194} t="15" v />
        <Dims x={116} y={472} t="50" v /><Dims x={155} y={408} t="10" v /><Dims x={155} y={456} t="20" v /><Dims x={155} y={503} t="10" v />
        <Dims x={770} y={458} t="20" v /><Dims x={816} y={457} t="40" v />
        <Dims x={545} y={578} t="10" /><Dims x={587} y={578} t="15" /><Dims x={629} y={578} t="10" /><Dims x={713} y={578} t="10" /><Dims x={628} y={612} t="60" />
        <path stroke="#c3c7cc" d="M337 624V704M415 624V704M586 624V704M697 663V704M586 663H816M337 639H586M337 655H586M337 671H586M337 687H586" />
        <Block x={373} y={636}>DRN BY</Block><Block x={377} y={651}>CHKD BY</Block><Block x={377} y={668}>APVD BY</Block>
        <Block x={375} y={684}>SCALE</Block><Block x={375} y={700}>DATE</Block>
        <Block x={488} y={636}>Afieq bin Amran</Block><Block x={472} y={651}>Sir Kamal</Block><Block x={472} y={668}>Sir Kamal</Block>
        <Block x={500} y={684}>1 : 1</Block><Block x={490} y={700}>14/5/2024</Block>
        <text x="592" y="636" fill="#e8eaed" fontSize="12">TITLE</text>
        <Block x={674} y={654}>Orthographic Exercise 6.1</Block>
        <Block x={588} y={676} a="start">DWG NO.</Block><Block x={730} y={676}>SHEET NO.</Block>
        <Block x={627} y={694}>01</Block><Block x={744} y={694}>1 of 1</Block>
        <rect x="816" y="622" width="152" height="82" fill="#fff" stroke="#9fe0a8" strokeWidth="1" />
        <path d="M858 634a18 18 0 1 0 12 31l-4-6-9 3-3-9 14-5h7a18 18 0 0 0-17-14z" fill="#2b489c" />
        <path d="M843 641h24M840 649h18M842 657h12M846 664h10" stroke="#2b489c" strokeWidth="3" />
        <path d="M854 645h20v15h-20z" fill="#3b5ab0" />
        <rect x="878" y="641" width="65" height="31" fill="#2b489c" />
        <text x="911" y="665" textAnchor="middle" fill="#fff" fontSize="22" fontWeight="700">UTeM</text>
        <path d="M838 680q4-5 8 0t8 0 8 0 8 0 8 0 8 0 8 0 8 0 8 0 8 0 8 0 8 0 8 0" stroke="#4c64ac" strokeWidth="3" />
        <text x="890" y="693" textAnchor="middle" fill="#2b489c" fontSize="7" fontWeight="700">UNIVERSITI TEKNIKAL MALAYSIA</text>
        <path d="M28 697h13v13H28z" stroke="#d7dade" strokeWidth="2" />
        <path d="M114 684l16 16M130 684l-16 16M36 612l8 7 8-7M44 619v8" stroke="#c4c8ce" strokeWidth="2" />
      </g>
    </Sheet>
  );
};

const Compass = styled.text`fill: #c6ccd2; font: 700 9px "Liberation Sans", sans-serif; text-anchor: middle;`;
const ViewCube = () => (
  <CubeBox>
    <svg width="56" height="74" viewBox="0 0 56 74" aria-label="View cube" role="img">
      <circle cx="28" cy="28" r="22" fill="none" stroke="#4a525c" strokeWidth="6" />
      <path d="M17 17h22v22H17z" fill="#bfc3c5" />
      <path d="M20 20h16v16H20z" fill="#adb3ba" />
      <text x="28" y="30" textAnchor="middle" fontSize="5" fontWeight="700" fontFamily="Liberation Sans, sans-serif" fill="#50575f">TOP</text>
      <Compass x="28" y="9">N</Compass><Compass x="28" y="54">S</Compass>
      <Compass x="5" y="31">W</Compass><Compass x="52" y="31">E</Compass>
      <rect x="17" y="63" width="22" height="7" rx="2" fill="#a5a9b1" />
      <text x="25" y="69" textAnchor="middle" fontSize="5" fontFamily="Liberation Sans, sans-serif" fill="#727985">WCS</text>
      <path d="M33 65h4v3h-4z" fill="none" stroke="#8a909a" />
    </svg>
  </CubeBox>
);

/* ---------- layer palette ---------- */
const Palette = styled.aside`
  position: absolute;
  left: 26%;
  top: 41px;
  display: grid;
  grid-template-columns: 12px minmax(0, 1fr);
  width: 356px;
  height: 143px;
  background: #3a4353;
  border: 1px solid #2c3441;
`;
const Spine = styled.div`
  display: flex;
  flex-direction: column;
  align-items: center;
  gap: 3px;
  padding: 1px 0;
  background: #333b4a;
`;
const SpineName = styled.h2`
  flex: 1;
  margin: 0;
  writing-mode: vertical-rl;
  transform: rotate(180deg);
  font-weight: 400;
  font-size: 6px;
  line-height: 8px;
  white-space: nowrap;
`;
const PaletteBody = styled.div`
  display: grid;
  grid-template-rows: 11px 11px minmax(0, 1fr) 13px;
  min-width: 0;
  padding: 3px 0 0 1px;
`;
const Bar = styled.div`
  display: flex;
  align-items: center;
  justify-content: space-between;
  padding: 0 2px;
`;
const Tools = styled.div<{ $gap: number }>`display: flex; align-items: center; gap: ${(p) => p.$gap}px;`;
const LayerSearch = styled.div`
  display: flex;
  align-items: center;
  align-self: start;
  width: 63px;
  height: 9px;
  background: #465166;
  input { width: 55px; padding-left: 1px; }
  input::placeholder { color: #b6bdc8; opacity: 1; }
`;
const Split = styled.div`display: grid; grid-template-columns: 57px minmax(0, 1fr); gap: 2px;`;
const Filters = styled.div`display: flex; flex-direction: column; min-width: 0; padding-bottom: 4px;`;
const FilterRow = styled.div<{ $h?: number }>`
  display: flex;
  align-items: center;
  justify-content: space-between;
  height: ${(p) => p.$h || 10}px;
  padding: 0 2px;
`;
const Fold = styled.button`font-size: 8px; line-height: 10px;`;
const Tree = styled.ul`
  flex: 1;
  margin: 0;
  padding: 2px 0 0 3px;
  list-style: none;
  white-space: nowrap;
  li { display: flex; align-items: center; gap: 2px; height: 9px; }
  li + li { padding-left: 9px; }
`;
const TreeBox = styled.i`width: 5px; height: 5px; background: #dfe3e8; border: 1px solid #8d96a4;`;
const Chosen = styled.span`background: #5673a0; padding: 0 1px;`;
const Scroll = styled.div<{ $w: string }>`
  display: flex;
  align-items: center;
  height: 8px;
  background: #efefef;
  padding-left: 8px;
  &::before { content: ""; width: ${(p) => p.$w}; height: 2px; background: #858585; }
`;
const Invert = styled.label`
  display: flex;
  align-items: center;
  gap: 2px;
  input { appearance: none; width: 6px; height: 6px; background: #f4f4f4; }
`;
const LayerPane = styled.div`display: flex; flex-direction: column; justify-content: space-between; min-width: 0; padding: 0 1px 4px 0;`;
const LayerTable = styled.table`
  width: 100%;
  table-layout: fixed;
  border-collapse: collapse;
  th, td { padding: 0 0 0 1px; height: 9px; text-align: left; font-weight: 400; white-space: nowrap; line-height: 8px; }
  th { height: 10px; background: #3f495b; }
  th:nth-child(2), td:nth-child(2) { border-right: 1px solid #2f3744; }
`;
const LayerRow = styled.tr<{ $on?: boolean }>`${(p) => p.$on && css`background: #6078a5;`}`;
const Inline = styled.span`display: flex; align-items: center; gap: 2px;`;
const Weight = styled.i<{ $bold?: boolean }>`width: 11px; margin-right: 1px; border-top: ${(p) => (p.$bold ? 2 : 1)}px solid #d3d8e0;`;

const layerCols = [10, 38, 9, 9, 9, 9, 24, 33, 34, 27, 27, 10, 44];
const layerHeads = ["S..", "Name", "O.", "F..", "L..", "P..", "Color", "Linetype", "Lineweight", "Transp...", "Plot St...", "N.", "Description"];
const layerData = [
  { name: "0", c: "#fff", cn: "wh...", type: "Continu...", w: "Defa...", plot: "print" },
  { name: "Constructi...", c: "#dcf57c", cn: "61", type: "ACAD_IS...", w: "Defa...", plot: "print" },
  { name: "Defpoints", c: "#fff", cn: "wh...", type: "Continu...", w: "Defa...", plot: "dimPrint" },
  { name: "dimension", c: "#6ff598", cn: "101", type: "Continu...", w: "Defa...", plot: "print" },
  { name: "Drawing li...", c: "#fff", cn: "wh...", type: "Continu...", w: "0.35...", plot: "noPrint" },
  { name: "Hidden line", c: "#fff", cn: "255", type: "ACAD_IS...", w: "Defa...", plot: "print" },
];

const LayerPalette = () => (
  <Palette>
    <Spine>
      <IconButton aria-label="Close palette"><X size={7} strokeWidth={4} /></IconButton>
      <IconButton aria-label="Auto-hide"><Pin size={6} strokeWidth={4} /></IconButton>
      <IconButton aria-label="Palette properties"><Settings size={6} strokeWidth={4} /></IconButton>
      <SpineName>LAYER PROPERTIES MANAGER</SpineName>
      <Art n="layers" s={9} />
    </Spine>
    <PaletteBody>
      <Bar>
        <span>Current layer: Construction line</span>
        <LayerSearch>
          <input aria-label="Search for layer" placeholder="Search for layer" />
          <Search size={6} strokeWidth={4} />
        </LayerSearch>
      </Bar>
      <Split>
        <Bar>
          <Tools $gap={3}>
            <Art n="folder" s={8} /><Art n="folder" s={8} /><LayerArt mark="#6cb4e4" />
          </Tools>
        </Bar>
        <Bar>
          <Tools $gap={1}>
            <LayerArt mark={Y} /><LayerArt mark="#55aaf0" /><LayerArt mark="#e25858" /><LayerArt mark="#57c274" />
          </Tools>
          <Tools $gap={3}>
            <RefreshCw size={8} strokeWidth={4} color="#4fcf70" /><Art n="listEdit" s={8} /><Settings size={8} strokeWidth={4} />
          </Tools>
        </Bar>
      </Split>
      <Split>
        <Filters>
          <FilterRow><span>Filters</span><Fold>«</Fold></FilterRow>
          <Tree>
            <li><TreeBox /><LayerArt mark="#57c274" /><Chosen>All</Chosen></li>
            <li><Slash>└</Slash><Art n="folder" s={7} />All Used L</li>
          </Tree>
          <Scroll $w="33px" />
          <FilterRow $h={12}>
            <Invert><input type="checkbox" />Invert filter</Invert><Fold>«</Fold>
          </FilterRow>
        </Filters>
        <LayerPane>
          <LayerTable>
            <colgroup>{layerCols.map((w, i) => <col key={i} style={{ width: `${(w / 283) * 100}%` }} />)}</colgroup>
            <thead><tr>{layerHeads.map((h) => <th key={h}>{h}</th>)}</tr></thead>
            <tbody>
              {layerData.map((r, i) => (
                <LayerRow key={r.name} $on={i === 1}>
                  <td><Art n={i === 1 ? "check" : "slab"} s={7} /></td>
                  <td>{r.name}</td>
                  <td><Art n="bulb" s={7} /></td>
                  <td><Art n="sun" s={7} /></td>
                  <td><Art n="lock" s={7} /></td>
                  <td><Art n={r.plot} s={7} /></td>
                  <td><Inline><Swatch $c={r.c} />{r.cn}</Inline></td>
                  <td>{r.type}</td>
                  <td><Inline><Weight $bold={i === 4} />{r.w}</Inline></td>
                  <td>0</td>
                  <td>Normal</td>
                  <td><Art n="vp" s={7} /></td>
                  <td />
                </LayerRow>
              ))}
            </tbody>
          </LayerTable>
          <Scroll $w="75%" />
        </LayerPane>
      </Split>
      <Bar>All: 6 layers displayed of 6 total layers</Bar>
    </PaletteBody>
  </Palette>
);

/* ---------- desktop task bar ---------- */
const Taskbar = styled(Track)<{ $warm?: boolean }>`
  height: ${(p) => (p.$warm ? 22 : 20)}px;
  padding-top: 3px;
  color: #333a44;
  line-height: 7px;
  background: ${(p) => p.$warm
    ? "linear-gradient(90deg, #ece9e3, #f1dfdb 20%, #f0dcda 65%, #ebe0df 80%, #e9e1ea)"
    : "linear-gradient(90deg, #e7e8e6, #dad6ea 14%, #ecdce1 28%, #f3dcdb 60%, #ece0e0 82%, #eadfea)"};
`;
const TwoLines = styled.span<{ $align?: string }>`
  display: flex;
  flex-direction: column;
  justify-self: ${(p) => p.$align || "center"};
  text-align: ${(p) => p.$align || "center"};
`;
const Weather = styled(TwoLines)`line-height: 8px; padding-left: 1px;`;
const SearchPill = styled.label`
  justify-self: stretch;
  display: flex;
  align-items: center;
  gap: 5px;
  height: 14px;
  padding-left: 5px;
  border-radius: 7px;
  background: #faf6f5;
  overflow: hidden;
  input { flex: 1; min-width: 0; font-size: 7px; }
  input::placeholder { color: #4b515a; opacity: 1; }
`;
const Launch = styled.button<{ $open?: string; $hot?: boolean }>`
  position: relative;
  display: grid;
  place-items: center;
  width: 18px;
  height: 17px;
  border-radius: 2px;
  ${(p) => p.$hot && css`background: #fbe7e7;`}
  ${(p) => p.$open && css`&::after { content: ""; position: absolute; bottom: 0; width: 3px; height: 1px; background: ${p.$open}; }`}
`;
const Badge = styled.b<{ $c: string }>`
  position: absolute;
  right: 0;
  top: 0;
  min-width: 6px;
  border-radius: 4px;
  background: ${(p) => p.$c};
  color: #fff;
  font-size: 5px;
  line-height: 7px;
  padding: 0 1px;
`;

const Rainbow = () => (
  <svg width="26" height="14" viewBox="0 0 26 14" aria-hidden="true">
    <path d="M2 13a11 11 0 0 1 22 0" fill="#e9dfc0" stroke="#5d4a4a" strokeWidth="3" />
    <path d="M4 13a9 9 0 0 1 18 0" fill="none" stroke="#6da58c" strokeWidth="2" />
    <path d="M6 12l3-4 2 3 2-6 3 6 2-3 2 4z" fill="#a87d3e" />
    <path d="M1 13q6-4 12-2t12 2z" fill="#e7ece8" />
    <path d="M0 14l2-4 3 4zM21 14l3-4 2 4z" fill="#5f6f4c" />
  </svg>
);

const apps = ["taskview", "logo", "matlab", "explorer", "chrome", "steam", "valorant", "pc", "discord", "razer", "cortex", "whatsapp", "word", "edge", "snip"];
const running = ["logo", "explorer", "chrome", "razer", "cortex", "whatsapp", "word", "edge", "snip"];

const Desktop = ({ time, warm }: { time: string; warm?: boolean }) => (
  <Taskbar $warm={warm} $cols={[23, 97, 25, 109, 1, ...apps.map((_, i) => (i ? 22 : 23)), 28, 18, 20, 16, 11, 13, 35, 13, 25, 3]}>
    <Art n="weather" s={12} />
    <Weather $align="start"><span>87°F</span><span>Mostly sunny</span></Weather>
    <IconButton aria-label="Start menu"><Art n="windows" s={12} /></IconButton>
    <SearchPill>
      <Search size={8} strokeWidth={3} />
      <input aria-label="Search" placeholder="Search" />
      <Rainbow />
    </SearchPill>
    <span />
    {apps.map((a) => (
      <Launch key={a} aria-label={a} $hot={a === "razer"} $open={warm && running.includes(a) ? (a === "razer" ? "#c33" : "#777") : undefined}>
        <Art n={a} s={12} />
        {a === "whatsapp" && <Badge $c="#2b7fd2">27</Badge>}
        {a === "chrome" && <Badge $c="#6d7f95">9</Badge>}
      </Launch>
    ))}
    <span />
    <IconButton aria-label="Hidden icons"><ChevronUp size={8} strokeWidth={3} /></IconButton>
    <TwoLines><span>ENG</span><span>US</span></TwoLines>
    <Monitor size={8} strokeWidth={3} />
    <VolumeX size={8} strokeWidth={3} />
    <BatteryMedium size={9} strokeWidth={4} />
    <TwoLines $align="end"><span>{time}</span><span>14/5/2024</span></TwoLines>
    <Bell size={8} strokeWidth={3} fill="#1d4e86" color="#1d4e86" />
    <Art n="copilot" s={12} />
  </Taskbar>
);

/* ---------- page ---------- */
const Shot = styled.article`display: flex; flex-direction: column;`;

const Workspace = ({ time, palette, cut }: { time: string; palette?: boolean; cut?: boolean }) => (
  <Shot>
    <Title cut={cut} inset={palette} />
    <RibbonArea active={palette} inset={palette} />
    <FileTabs inset={palette} />
    <Canvas>
      <Drawing shift={palette ? 1 : 0} />
      <ViewLabel>[−][Top][2D Wireframe]</ViewLabel>
      <DocButtons>
        <Minus size={7} strokeWidth={6} /><Restore size={6} strokeWidth={4} /><X size={7} strokeWidth={5} />
      </DocButtons>
      <ViewCube />
      <NavBar>
        <svg width="12" height="12" viewBox="0 0 24 24" aria-hidden="true"><circle cx="12" cy="12" r="9" fill="none" stroke="currentColor" strokeWidth="2" /><circle cx="12" cy="12" r="4" fill="none" stroke="currentColor" strokeWidth="2" /></svg>
        <Hand size={11} strokeWidth={2} />
        <Search size={11} strokeWidth={2} />
        <Move size={11} strokeWidth={2} />
        <svg width="11" height="11" viewBox="0 0 24 24" aria-hidden="true"><path d="M3 8h16v14H3zM8 3h14v14M9 12v6l5-3z" fill="none" stroke="currentColor" strokeWidth="2" /></svg>
      </NavBar>
      {palette && <LayerPalette />}
    </Canvas>
    <Status inset={palette} />
    <Desktop time={time} warm={palette} />
  </Shot>
);

export default function App() {
  return (
    <>
      <Global />
      <Workspace time="12:05 PM" cut />
      <Workspace time="12:06 PM" palette />
    </>
  );
}
